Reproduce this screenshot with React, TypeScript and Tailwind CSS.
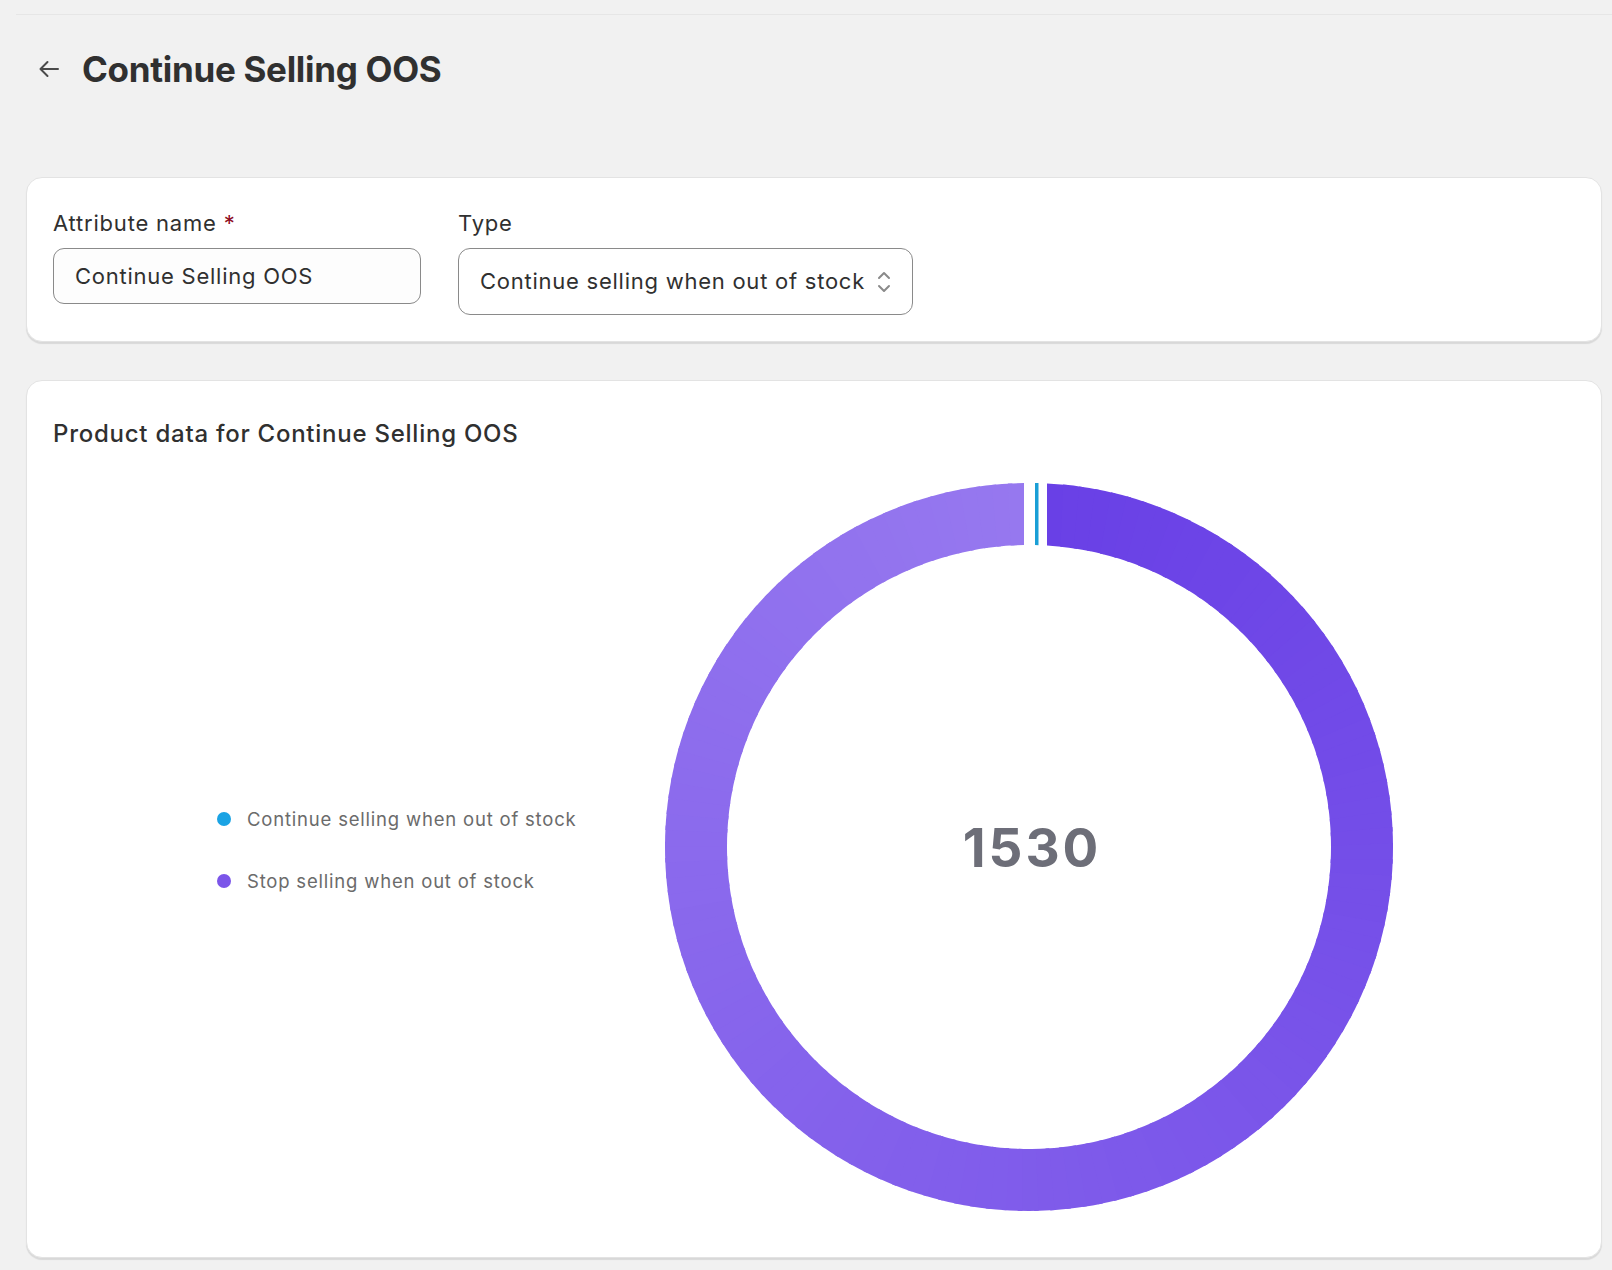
import React from 'react';

const CX = 364;
const CY = 364;
const R_OUT = 364;
const R_IN = 302;

// point on circle, angle measured clockwise from 12 o'clock
const pt = (r: number, a: number) => [CX + r * Math.sin(a), CY - r * Math.cos(a)];

// annular sector between two angles
const sector = (a0o: number, a1o: number, a0i: number, a1i: number) => {
  const [x0, y0] = pt(R_OUT, a0o);
  const [x1, y1] = pt(R_OUT, a1o);
  const [x2, y2] = pt(R_IN, a1i);
  const [x3, y3] = pt(R_IN, a0i);
  const largeO = a1o - a0o > Math.PI ? 1 : 0;
  const largeI = a1i - a0i > Math.PI ? 1 : 0;
  return `M${x0} ${y0} A${R_OUT} ${R_OUT} 0 ${largeO} 1 ${x1} ${y1} L${x2} ${y2} A${R_IN} ${R_IN} 0 ${largeI} 0 ${x3} ${y3} Z`;
};

// angle of a vertical edge at horizontal offset dx
const edge = (dx: number, r: number) => Math.asin(dx / r);

const mix = (a: string, b: string, t: number) => {
  const pa = [1, 3, 5].map((i) => parseInt(a.slice(i, i + 2), 16));
  const pb = [1, 3, 5].map((i) => parseInt(b.slice(i, i + 2), 16));
  return `rgb(${pa.map((v, i) => Math.round(v + (pb[i] - v) * t)).join(',')})`;
};

const Donut: React.FC = () => {
  const startO = edge(18, R_OUT);
  const startI = edge(18, R_IN);
  const endO = 2 * Math.PI + edge(-5, R_OUT);
  const endI = 2 * Math.PI + edge(-5, R_IN);
  const steps = 140;
  const slices = [];
  for (let k = 0; k < steps; k++) {
    const t0 = k / steps;
    const t1 = Math.min(1, (k + 1) / steps + 0.002);
    slices.push(
      <path
        key={k}
        d={sector(
          startO + (endO - startO) * t0,
          startO + (endO - startO) * t1,
          startI + (endI - startI) * t0,
          startI + (endI - startI) * t1,
        )}
        fill={mix('#6940e6', '#9678ef', (t0 + t1) / 2)}
      />,
    );
  }
  return (
    <svg width="728" height="728" viewBox="0 0 728 728">
      {slices}
      <path d={sector(edge(6, R_OUT), edge(9.5, R_OUT), edge(6, R_IN), edge(9.5, R_IN))} fill="#1a9fd6" />
    </svg>
  );
};

const App: React.FC = () => {
  return (
    <div
      className="min-h-screen bg-[#f1f1f1] text-[#303030]"
      style={{ fontFamily: 'Inter, "Noto Sans", sans-serif' }}
    >
      <div className="ml-4 h-[15px] border-b border-[#e6e6e6]" />
      <div className="pl-[26px] pr-[10px]">
        <div className="flex items-center h-[52px] mt-[28px] pl-[11px]">
          <svg width="24" height="24" viewBox="0 0 24 24" fill="none" stroke="#4a4a4a" strokeWidth="2" strokeLinecap="round" strokeLinejoin="round">
            <path d="M21 12H3.5M10.5 5l-7 7 7 7" />
          </svg>
          <h1 className="ml-[21px] text-[35px] font-bold tracking-[-0.3px] text-[#303030]">Continue Selling OOS</h1>
        </div>

        <div className="mt-[82px] rounded-[16px] bg-white border border-[#e3e3e3] shadow-[0_2px_1px_rgba(0,0,0,0.10)] pl-[26px] pt-[31px] pb-[26px]">
          <div className="flex items-start gap-[37px]">
            <div className="w-[368px]">
              <label className="block text-[22px] leading-[28px] tracking-[0.8px] text-[#303030]">
                Attribute name <span className="text-[#8e0b21]">*</span>
              </label>
              <div className="mt-[11px] h-[56px] rounded-[11px] border border-[#8a8a8a] bg-[#fdfdfd] flex items-center pl-[21px] text-[22px] tracking-[0.75px] text-[#303030]">
                Continue Selling OOS
              </div>
            </div>
            <div>
              <label className="block text-[22px] leading-[28px] tracking-[0.8px] text-[#303030]">Type</label>
              <div className="mt-[11px] h-[67px] w-[455px] rounded-[12px] border border-[#8a8a8a] bg-white flex items-center gap-[11px] pl-[21px] text-[22px] tracking-[0.75px] text-[#303030]">
                <span>Continue selling when out of stock</span>
                <svg width="16" height="26" viewBox="0 0 16 26" fill="none" stroke="#8a8a8a" strokeWidth="2" strokeLinecap="round" strokeLinejoin="round">
                  <path d="M3 9l5-5 5 5M3 17l5 5 5-5" />
                </svg>
              </div>
            </div>
          </div>
        </div>

        <div className="mt-[38px] rounded-[16px] bg-white border border-[#e3e3e3] shadow-[0_2px_1px_rgba(0,0,0,0.10)] pl-[26px] pt-[38px] pb-[46px]">
          <h2 className="text-[24px] leading-[30px] font-medium tracking-[0.75px] text-[#303030]">Product data for Continue Selling OOS</h2>
          <div className="mt-[34px] flex items-center">
            <div className="w-[612px] pl-[164px] pt-[5px] flex flex-col gap-[36px]">
              <div className="flex items-center gap-[16px] text-[18.5px] leading-[26px] text-[#6b6b6b] tracking-[0.8px]">
                <span className="w-[14px] h-[14px] rounded-full bg-[#1aa3e4]" />
                Continue selling when out of stock
              </div>
              <div className="flex items-center gap-[16px] text-[18.5px] leading-[26px] text-[#6b6b6b] tracking-[0.8px]">
                <span className="w-[14px] h-[14px] rounded-full bg-[#7b55e9]" />
                Stop selling when out of stock
              </div>
            </div>
            <div className="relative">
              <Donut />
              <div className="absolute inset-0 flex items-center justify-center">
                <span className="text-[53px] font-bold tracking-[3px] text-[#6d6e78] pl-[6px] pt-[4px]">1530</span>
              </div>
            </div>
          </div>
        </div>
      </div>
    </div>
  );
};

export default App;
